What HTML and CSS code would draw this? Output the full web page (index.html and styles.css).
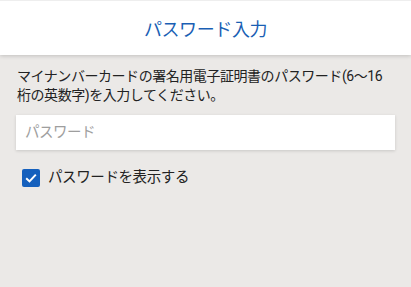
FILE: index.html
```html
<!DOCTYPE html>
<html lang="ja">
<head>
    <meta charset="UTF-8">
    <title>パスワード入力</title>
    <link rel="stylesheet" href="styles.css">
</head>
<body>
    <div class="header">
        <h1 class="title">パスワード入力</h1>
    </div>

    <div class="content">
        <p class="desc">マイナンバーカードの署名用電子証明書のパスワード(6〜16桁の英数字)を入力してください。</p>

        <input class="pw" type="text" placeholder="パスワード">

        <label class="show">
            <span class="check">
                <svg width="14" height="14" viewBox="0 0 14 14">
                    <path d="M2.2 7.3 L5.5 10.4 L11.8 3.6" fill="none" stroke="#fff" stroke-width="2"/>
                </svg>
            </span>
            <span class="show_text">パスワードを表示する</span>
        </label>
    </div>
</body>
</html>
```

FILE: styles.css
```css
* {
    padding: 0;
    margin: 0;
    box-sizing: border-box;
}
html, body {
    height: 100%;
}
body {
    background-color: #ebe9e7;
    font-family: Roboto, "Noto Sans CJK JP", sans-serif;
    color: #222;
}
.header {
    height: 55px;
    background-color: #fff;
    border-top: 1px solid #eeeeee;
    box-shadow: 0 1px 4px rgba(0, 0, 0, 0.18);
    display: flex;
    align-items: center;
    justify-content: center;
}
.title {
    font-size: 18px;
    font-weight: normal;
    letter-spacing: -0.4px;
    color: #1a5fb4;
}
.content {
    padding: 12px 16px 0 17px;
}
.desc {
    font-size: 14px;
    line-height: 19px;
    letter-spacing: -0.45px;
}
.pw {
    display: block;
    width: 379px;
    height: 35px;
    margin: 10px 0 0 -1px;
    border: none;
    outline: none;
    background-color: #fff;
    box-shadow: 0 1px 3px rgba(0, 0, 0, 0.15);
    padding: 0 9px;
    font-family: Roboto, "Noto Sans CJK JP", sans-serif;
    font-size: 14.5px;
    letter-spacing: -0.5px;
}
.pw::placeholder {
    color: #9e9e9e;
}
.show {
    display: flex;
    align-items: center;
    margin: 19px 0 0 5px;
}
.check {
    width: 18px;
    height: 18px;
    border-radius: 2px;
    background-color: #1560bd;
    display: flex;
    align-items: center;
    justify-content: center;
}
.show_text {
    margin-left: 8px;
    font-size: 14.5px;
    line-height: 18px;
    letter-spacing: -0.4px;
}
```
